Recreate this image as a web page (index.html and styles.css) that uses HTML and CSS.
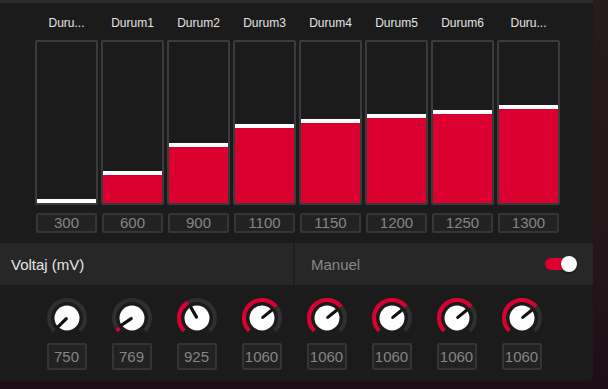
FILE: index.html
```html
<!DOCTYPE html>
<html lang="tr">
<head>
    <meta charset="UTF-8">
    <meta name="viewport" content="width=device-width, initial-scale=1.0">
    <title>Voltaj Durumlari</title>
    <link rel="stylesheet" href="styles.css">
</head>
<body>

<div class="panel">
    <div class="panel-top"></div>

    <!-- durum bars -->
    <div class="states">
        <div class="state">
            <div class="state-name">Duru...</div>
            <div class="bar-box"><div class="bar-fill" style="height: 4px"></div></div>
            <div class="bar-value">300</div>
        </div>
        <div class="state">
            <div class="state-name">Durum1</div>
            <div class="bar-box"><div class="bar-fill" style="height: 32px"></div></div>
            <div class="bar-value">600</div>
        </div>
        <div class="state">
            <div class="state-name">Durum2</div>
            <div class="bar-box"><div class="bar-fill" style="height: 60px"></div></div>
            <div class="bar-value">900</div>
        </div>
        <div class="state">
            <div class="state-name">Durum3</div>
            <div class="bar-box"><div class="bar-fill" style="height: 79px"></div></div>
            <div class="bar-value">1100</div>
        </div>
        <div class="state">
            <div class="state-name">Durum4</div>
            <div class="bar-box"><div class="bar-fill" style="height: 84px"></div></div>
            <div class="bar-value">1150</div>
        </div>
        <div class="state">
            <div class="state-name">Durum5</div>
            <div class="bar-box"><div class="bar-fill" style="height: 89px"></div></div>
            <div class="bar-value">1200</div>
        </div>
        <div class="state">
            <div class="state-name">Durum6</div>
            <div class="bar-box"><div class="bar-fill" style="height: 93px"></div></div>
            <div class="bar-value">1250</div>
        </div>
        <div class="state">
            <div class="state-name">Duru...</div>
            <div class="bar-box"><div class="bar-fill" style="height: 98px"></div></div>
            <div class="bar-value">1300</div>
        </div>
    </div>

    <div class="mode-row">
        <div class="mode-cell">
            <span class="mode-title">Voltaj (mV)</span>
        </div>
        <div class="mode-divider"></div>
        <div class="mode-cell mode-right">
            <span class="mode-label">Manuel</span>
            <div class="toggle">
                <div class="toggle-track"></div>
                <div class="toggle-knob"></div>
            </div>
        </div>
    </div>

    <!-- knobs: 750..1200 over 270deg, arc uses pathLength 450 -->
    <div class="knobs">
        <div class="knob">
            <svg width="44" height="44" viewBox="0 0 44 44">
                <path class="knob-track" d="M9.27 34.73 A18 18 0 1 1 34.73 34.73"/>
                <circle class="knob-face" cx="22" cy="22" r="12.5"/>
                <line class="knob-pointer" x1="22" y1="21" x2="22" y2="10" transform="rotate(-135 22 22)"/>
            </svg>
            <div class="knob-value">750</div>
        </div>
        <div class="knob">
            <svg width="44" height="44" viewBox="0 0 44 44">
                <path class="knob-track" d="M9.27 34.73 A18 18 0 1 1 34.73 34.73"/>
                <path class="knob-arc" pathLength="450" stroke-dasharray="19 1000" d="M9.27 34.73 A18 18 0 1 1 34.73 34.73"/>
                <circle class="knob-face" cx="22" cy="22" r="12.5"/>
                <line class="knob-pointer" x1="22" y1="21" x2="22" y2="10" transform="rotate(-124 22 22)"/>
            </svg>
            <div class="knob-value">769</div>
        </div>
        <div class="knob">
            <svg width="44" height="44" viewBox="0 0 44 44">
                <path class="knob-track" d="M9.27 34.73 A18 18 0 1 1 34.73 34.73"/>
                <path class="knob-arc" pathLength="450" stroke-dasharray="175 1000" d="M9.27 34.73 A18 18 0 1 1 34.73 34.73"/>
                <circle class="knob-face" cx="22" cy="22" r="12.5"/>
                <line class="knob-pointer" x1="22" y1="21" x2="22" y2="10" transform="rotate(-30 22 22)"/>
            </svg>
            <div class="knob-value">925</div>
        </div>
        <div class="knob">
            <svg width="44" height="44" viewBox="0 0 44 44">
                <path class="knob-track" d="M9.27 34.73 A18 18 0 1 1 34.73 34.73"/>
                <path class="knob-arc" pathLength="450" stroke-dasharray="310 1000" d="M9.27 34.73 A18 18 0 1 1 34.73 34.73"/>
                <circle class="knob-face" cx="22" cy="22" r="12.5"/>
                <line class="knob-pointer" x1="22" y1="21" x2="22" y2="10" transform="rotate(51 22 22)"/>
            </svg>
            <div class="knob-value">1060</div>
        </div>
        <div class="knob">
            <svg width="44" height="44" viewBox="0 0 44 44">
                <path class="knob-track" d="M9.27 34.73 A18 18 0 1 1 34.73 34.73"/>
                <path class="knob-arc" pathLength="450" stroke-dasharray="310 1000" d="M9.27 34.73 A18 18 0 1 1 34.73 34.73"/>
                <circle class="knob-face" cx="22" cy="22" r="12.5"/>
                <line class="knob-pointer" x1="22" y1="21" x2="22" y2="10" transform="rotate(51 22 22)"/>
            </svg>
            <div class="knob-value">1060</div>
        </div>
        <div class="knob">
            <svg width="44" height="44" viewBox="0 0 44 44">
                <path class="knob-track" d="M9.27 34.73 A18 18 0 1 1 34.73 34.73"/>
                <path class="knob-arc" pathLength="450" stroke-dasharray="310 1000" d="M9.27 34.73 A18 18 0 1 1 34.73 34.73"/>
                <circle class="knob-face" cx="22" cy="22" r="12.5"/>
                <line class="knob-pointer" x1="22" y1="21" x2="22" y2="10" transform="rotate(51 22 22)"/>
            </svg>
            <div class="knob-value">1060</div>
        </div>
        <div class="knob">
            <svg width="44" height="44" viewBox="0 0 44 44">
                <path class="knob-track" d="M9.27 34.73 A18 18 0 1 1 34.73 34.73"/>
                <path class="knob-arc" pathLength="450" stroke-dasharray="310 1000" d="M9.27 34.73 A18 18 0 1 1 34.73 34.73"/>
                <circle class="knob-face" cx="22" cy="22" r="12.5"/>
                <line class="knob-pointer" x1="22" y1="21" x2="22" y2="10" transform="rotate(51 22 22)"/>
            </svg>
            <div class="knob-value">1060</div>
        </div>
        <div class="knob">
            <svg width="44" height="44" viewBox="0 0 44 44">
                <path class="knob-track" d="M9.27 34.73 A18 18 0 1 1 34.73 34.73"/>
                <path class="knob-arc" pathLength="450" stroke-dasharray="310 1000" d="M9.27 34.73 A18 18 0 1 1 34.73 34.73"/>
                <circle class="knob-face" cx="22" cy="22" r="12.5"/>
                <line class="knob-pointer" x1="22" y1="21" x2="22" y2="10" transform="rotate(51 22 22)"/>
            </svg>
            <div class="knob-value">1060</div>
        </div>
    </div>
</div>

</body>
</html>
```

FILE: styles.css
```css
html, body {
    margin: 0;
    height: 100%;
}
body {
    font-family: "Liberation Sans", Arial, sans-serif;
    background: linear-gradient(180deg, #281b1b 0%, #231519 70%, #1e0e17 100%);
    overflow: hidden;
}
.panel {
    width: 593px;
    height: 381px;
    background-color: #1b1b1b;
    border-radius: 0 0 5px 0;
    display: flex;
    flex-direction: column;
}
.panel-top {
    height: 3px;
    background-color: #2b2b2b;
}

/* bars */
.states {
    display: grid;
    grid-template-columns: repeat(8, 63px);
    column-gap: 3px;
    padding: 13px 0 0 35px;
}
.state {
    display: flex;
    flex-direction: column;
    align-items: center;
}
.state-name {
    height: 14px;
    line-height: 14px;
    font-size: 12px;
    color: #e4e4e4;
}
.bar-box {
    box-sizing: border-box;
    width: 63px;
    height: 165px;
    margin-top: 10px;
    border: 2px solid #3b3b3b;
    border-radius: 2px;
    display: flex;
    flex-direction: column;
    justify-content: flex-end;
}
.bar-fill {
    box-sizing: border-box;
    background-color: #dc0030;
    border-top: 4px solid #fff;
}
.bar-value {
    box-sizing: border-box;
    width: 61px;
    height: 20px;
    margin-top: 8px;
    border: 2px solid #363636;
    border-radius: 2px;
    background-color: #222;
    color: #858585;
    font-size: 15px;
    line-height: 16px;
    text-align: center;
}

/* mode row */
.mode-row {
    display: flex;
    height: 42px;
    margin-top: 10px;
    background-color: #272727;
}
.mode-cell {
    width: 293px;
    display: flex;
    align-items: center;
    padding-left: 11px;
    box-sizing: border-box;
}
.mode-divider {
    width: 2px;
    background-color: #1f1f1f;
}
.mode-right {
    flex: 1;
    padding: 0 16px 0 16px;
    justify-content: space-between;
}
.mode-title {
    font-size: 15px;
    color: #e6e6e6;
}
.mode-label {
    font-size: 15px;
    color: #888;
}
.toggle {
    position: relative;
    width: 32px;
    height: 16px;
}
.toggle-track {
    position: absolute;
    left: 0;
    right: 2px;
    top: 2px;
    bottom: 2px;
    border-radius: 6px;
    background-color: #dc0030;
}
.toggle-knob {
    position: absolute;
    right: 0;
    top: 0;
    width: 16px;
    height: 16px;
    border-radius: 50%;
    background-color: #fff;
    box-shadow: 0 1px 2px rgba(0, 0, 0, 0.5);
}

/* knobs */
.knobs {
    display: grid;
    grid-template-columns: repeat(8, 65px);
    padding: 11px 0 0 34px;
}
.knob {
    display: flex;
    flex-direction: column;
    align-items: center;
}
.knob svg {
    display: block;
}
.knob-track {
    fill: none;
    stroke: #2f2f2f;
    stroke-width: 4;
}
.knob-arc {
    fill: none;
    stroke: #dc0030;
    stroke-width: 4;
}
.knob-face {
    fill: #fff;
}
.knob-pointer {
    stroke: #111;
    stroke-width: 3.2;
    stroke-linecap: round;
}
.knob-value {
    box-sizing: border-box;
    width: 40px;
    height: 27px;
    margin-top: 3px;
    border: 2px solid #343434;
    border-radius: 2px;
    background-color: #222;
    color: #858585;
    font-size: 15px;
    line-height: 23px;
    text-align: center;
}
```
